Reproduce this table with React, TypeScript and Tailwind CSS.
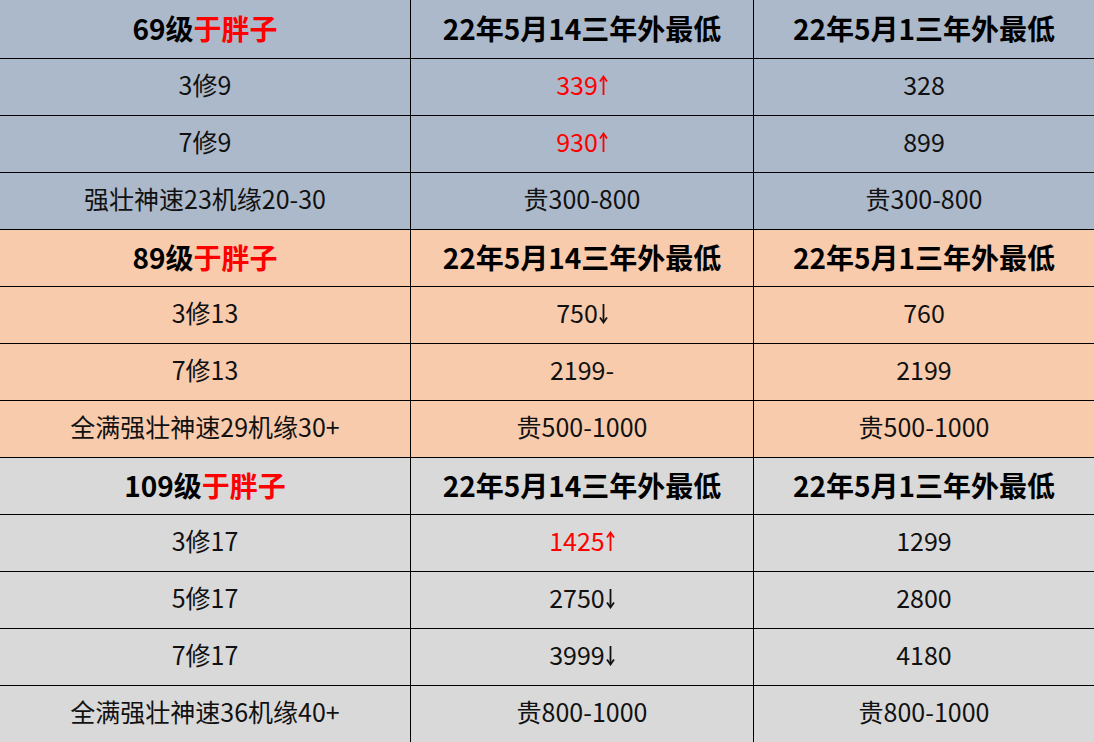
type Row = { label: string; now: string; arrow?: 'up' | 'down'; prev: string };

type Section = {
  level: string;
  bg: string;
  rows: Row[];
};

const sections: Section[] = [
  {
    level: '69级',
    bg: 'bg-[#acb9ca]',
    rows: [
      { label: '3修9', now: '339', arrow: 'up', prev: '328' },
      { label: '7修9', now: '930', arrow: 'up', prev: '899' },
      { label: '强壮神速23机缘20-30', now: '贵300-800', prev: '贵300-800' },
    ],
  },
  {
    level: '89级',
    bg: 'bg-[#f8cbad]',
    rows: [
      { label: '3修13', now: '750', arrow: 'down', prev: '760' },
      { label: '7修13', now: '2199-', prev: '2199' },
      { label: '全满强壮神速29机缘30+', now: '贵500-1000', prev: '贵500-1000' },
    ],
  },
  {
    level: '109级',
    bg: 'bg-[#d9d9d9]',
    rows: [
      { label: '3修17', now: '1425', arrow: 'up', prev: '1299' },
      { label: '5修17', now: '2750', arrow: 'down', prev: '2800' },
      { label: '7修17', now: '3999', arrow: 'down', prev: '4180' },
      { label: '全满强壮神速36机缘40+', now: '贵800-1000', prev: '贵800-1000' },
    ],
  },
];

const font = { fontFamily: '"Microsoft YaHei", "Noto Sans CJK SC", "Noto Sans", sans-serif' };

// thin arrow like the YaHei ↑ / ↓ glyphs
function Arrow({ dir }: { dir: 'up' | 'down' }) {
  return (
    <svg
      width="9"
      height="21"
      viewBox="0 0 9 21"
      className={`ml-[1px] ${dir === 'down' ? 'rotate-180' : ''}`}
      fill="none"
      stroke="currentColor"
      strokeWidth="1.8"
    >
      <path d="M4.5 2v18" />
      <path d="M1 6.5 4.5 1.5 8 6.5" />
    </svg>
  );
}

function Cell({
  children,
  last,
  className = '',
}: {
  children: React.ReactNode;
  last?: boolean;
  className?: string;
}) {
  return (
    <div
      className={`flex items-center justify-center whitespace-nowrap ${last ? '' : 'border-r border-black'} ${className}`}
    >
      {children}
    </div>
  );
}

export default function App() {
  let rowIndex = 0;
  const rowHeight = () => {
    const h = rowIndex === 0 ? 'h-[59px]' : 'h-[57px]';
    rowIndex++;
    return h;
  };

  return (
    <div className="w-[1094px] h-[742px] overflow-hidden bg-white" style={font}>
      {sections.map((s) => (
        <div key={s.level} className={s.bg}>
          <div
            className={`grid grid-cols-[411px_343px_340px] border-b border-black text-[28px] font-bold text-black ${rowHeight()}`}
          >
            <Cell className="pb-[2px]">
              {s.level}
              <span className="text-[#ff0000]">于胖子</span>
            </Cell>
            <Cell className="pb-[2px]">22年5月14三年外最低</Cell>
            <Cell className="pb-[2px]" last>
              22年5月1三年外最低
            </Cell>
          </div>
          {s.rows.map((r) => (
            <div
              key={r.label}
              className={`grid grid-cols-[411px_343px_340px] border-b border-black text-[25px] text-[#111] ${rowHeight()}`}
            >
              <Cell className="pb-[4px]">{r.label}</Cell>
              <Cell className={`pb-[4px] ${r.arrow === 'up' ? 'text-[#ff0000]' : ''}`}>
                {r.now}
                {r.arrow && <Arrow dir={r.arrow} />}
              </Cell>
              <Cell className="pb-[4px]" last>
                {r.prev}
              </Cell>
            </div>
          ))}
        </div>
      ))}
    </div>
  );
}
